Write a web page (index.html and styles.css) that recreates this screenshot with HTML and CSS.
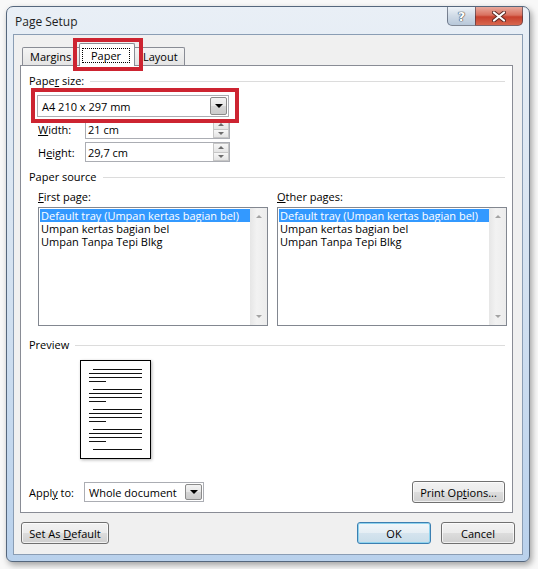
FILE: index.html
```html
<!DOCTYPE html>
<html lang="en">
<head>
  <meta charset="UTF-8">
  <title>Page Setup</title>
  <link rel="stylesheet" href="styles.css">
</head>
<body>
  <div class="window">
    <div class="titlebar">
      <span class="title">Page Setup</span>
      <div class="caption">
        <div class="cap-help">?</div>
        <div class="cap-close">
          <svg width="14" height="11" viewBox="0 0 14 11">
            <path d="M2 1.5 L12 9.5 M12 1.5 L2 9.5" stroke="#5a2a25" stroke-width="4" stroke-linecap="round"/>
            <path d="M2 1.5 L12 9.5 M12 1.5 L2 9.5" stroke="#ffffff" stroke-width="2.2" stroke-linecap="round"/>
          </svg>
        </div>
      </div>
    </div>

    <div class="client">
      <div class="tabs">
        <div class="tab tab-margins">Margins</div>
        <div class="tab tab-paper active"><span class="focus">Paper</span></div>
        <div class="tab tab-layout">Layout</div>
      </div>

      <div class="panel">
        <div class="group"><span>Pape<u>r</u> size:</span></div>
        <div class="combo combo-size">
          <span class="combo-text">A4 210 x 297 mm</span>
          <span class="drop"><i></i></span>
        </div>

        <div class="field-row first">
          <span class="field-label"><u>W</u>idth:</span>
          <div class="spin"><span class="spin-text">21 cm</span><span class="spin-btns"><b class="up"></b><b class="down"></b></span></div>
        </div>
        <div class="field-row">
          <span class="field-label">H<u>e</u>ight:</span>
          <div class="spin"><span class="spin-text">29,7 cm</span><span class="spin-btns"><b class="up"></b><b class="down"></b></span></div>
        </div>

        <div class="group source-title"><span>Paper source</span></div>
        <div class="sources">
          <div class="source">
            <span class="source-label"><u>F</u>irst page:</span>
            <div class="list">
              <div class="items">
                <div class="item sel">Default tray (Umpan kertas bagian bel)</div>
                <div class="item">Umpan kertas bagian bel</div>
                <div class="item">Umpan Tanpa Tepi Blkg</div>
              </div>
              <div class="scroll"><b class="up"></b><b class="down"></b></div>
            </div>
          </div>
          <div class="source">
            <span class="source-label"><u>O</u>ther pages:</span>
            <div class="list">
              <div class="items">
                <div class="item sel">Default tray (Umpan kertas bagian bel)</div>
                <div class="item">Umpan kertas bagian bel</div>
                <div class="item">Umpan Tanpa Tepi Blkg</div>
              </div>
              <div class="scroll"><b class="up"></b><b class="down"></b></div>
            </div>
          </div>
        </div>

        <div class="group preview-title"><span>Preview</span></div>
        <div class="page">
          <svg width="71" height="99" viewBox="0 0 71 99">
            <rect x="0.5" y="0.5" width="70" height="98" fill="#fff" stroke="#000"/>
            <g stroke="#111" stroke-width="1.2">
              <path d="M13 9.5H62 M9 13.5H62 M9 17.5H62 M9 21.5H26"/>
              <path d="M13 29.5H62 M9 33.5H62 M9 37.5H62 M9 41.5H26"/>
              <path d="M13 49.5H62 M9 53.5H62 M9 57.5H62 M9 61.5H26"/>
              <path d="M13 69.5H62 M9 73.5H62 M9 77.5H62 M9 81.5H26"/>
              <path d="M13 89.5H62"/>
            </g>
          </svg>
        </div>

        <div class="apply-row">
          <span class="apply-label">Appl<u>y</u> to:</span>
          <div class="combo combo-apply">
            <span class="combo-text">Whole document</span>
            <span class="drop"><i></i></span>
          </div>
          <button class="btn btn-print">Print Op<u>t</u>ions...</button>
        </div>
      </div>

      <div class="footer">
        <button class="btn btn-default">Set As <u>D</u>efault</button>
        <button class="btn btn-ok">OK</button>
        <button class="btn btn-cancel">Cancel</button>
      </div>
    </div>
  </div>

  <!-- red highlight marks drawn over the dialog -->
  <div class="mark mark-tab"></div>
  <div class="mark mark-size"></div>
</body>
</html>
```

FILE: styles.css
```css
body {
  margin: 0;
  width: 538px;
  height: 569px;
  overflow: hidden;
  position: relative;
  background-color: #f8f8f8;
  font-family: 'Open Sans', 'Noto Sans', sans-serif;
  font-size: 11px;
  color: #000000;
}

u {
  text-decoration-thickness: 1px;
  text-underline-offset: 1px;
}

.window {
  margin: 6px 0 0 6px;
  width: 524px;
  height: 556px;
  box-sizing: border-box;
  border: 1px solid #55677d;
  border-radius: 7px 7px 6px 6px;
  background: linear-gradient(#e9eff6, #d6e3f1 45%, #b9d1ec);
  padding: 0 6px 6px;
  box-shadow: 2px 3px 6px rgba(0, 0, 0, 0.35);
  display: flex;
  flex-direction: column;
}

.titlebar {
  height: 27px;
  display: flex;
  align-items: flex-start;
}

.title {
  padding: 7px 0 0 2px;
  line-height: 16px;
  font-size: 12px;
  color: #1e1e1e;
}

.caption {
  margin-left: auto;
  display: flex;
}

.cap-help,
.cap-close {
  height: 19px;
  box-sizing: border-box;
  border: 1px solid rgba(40, 50, 70, 0.55);
  border-top: none;
  display: flex;
  align-items: center;
  justify-content: center;
}

.cap-help {
  width: 28px;
  border-right: none;
  border-radius: 0 0 0 5px;
  background: linear-gradient(#eef3f8, #cfdae6 50%, #b8c8da);
  font-family: 'DejaVu Sans', sans-serif;
  font-weight: bold;
  font-size: 13px;
  color: #ffffff;
  text-shadow: 0 0 1px #3a4350, 0 0 1px #3a4350, 0 0 1px #3a4350;
}

.cap-close {
  width: 48px;
  border-radius: 0 0 5px 0;
  background: linear-gradient(#e9a99c, #d9715f 45%, #c7402d 55%, #d8674f);
}

.client {
  flex: 1;
  background-color: #f0f0f0;
  border: 1px solid #8a9db4;
  display: flex;
  flex-direction: column;
}

.tabs {
  height: 30px;
  box-sizing: border-box;
  padding-left: 8px;
  display: flex;
  align-items: flex-end;
}

.tab {
  height: 18px;
  box-sizing: border-box;
  border: 1px solid #898c95;
  border-bottom: none;
  border-radius: 2px 2px 0 0;
  background: linear-gradient(#f4f4f4, #e4e4e4);
  line-height: 17px;
  padding-left: 7px;
}

.tab-margins {
  width: 59px;
}

.tab-paper {
  width: 56px;
  height: 23px;
  margin: 0 -2px -1px;
  padding: 0;
  position: relative;
  z-index: 1;
  background: #ffffff;
}

.focus {
  display: block;
  margin: 4px 4px 0 2px;
  height: 15px;
  box-sizing: border-box;
  border: 1px dotted #000000;
  line-height: 13px;
  text-align: center;
}

.tab-layout {
  width: 52px;
  padding-left: 9px;
}

.panel {
  margin: 0 9px 0 6px;
  height: 448px;
  box-sizing: border-box;
  border: 1px solid #898c95;
  background: #ffffff;
  padding: 7px 7px 9px 8px;
  display: flex;
  flex-direction: column;
}

.group {
  display: flex;
  align-items: center;
  line-height: 16px;
}

.group::after {
  content: "";
  flex: 1;
  height: 1px;
  margin-left: 6px;
  background-color: #dcdcdc;
}

.combo {
  display: flex;
  align-items: center;
  box-sizing: border-box;
  border: 1px solid #abadb3;
  background: #ffffff;
}

.combo-text {
  flex: 1;
  padding-left: 4px;
  white-space: nowrap;
}

.combo-size {
  margin: 6px 0 0 8px;
  width: 192px;
  height: 22px;
}

.drop {
  width: 17px;
  height: 18px;
  margin-right: 1px;
  box-sizing: border-box;
  border: 1px solid #8b8b8b;
  border-radius: 2px;
  background: linear-gradient(#f3f3f3, #e6e6e6 50%, #d6d6d6 50%, #cbcbcb);
  display: flex;
  align-items: center;
  justify-content: center;
}

.drop i {
  width: 0;
  height: 0;
  border-left: 4px solid transparent;
  border-right: 4px solid transparent;
  border-top: 4px solid #000000;
}

.field-row {
  display: flex;
  align-items: center;
  margin: 3px 0 0 9px;
}

.field-row.first {
  margin-top: 2px;
}

.field-label {
  width: 47px;
}

.spin {
  width: 145px;
  height: 20px;
  box-sizing: border-box;
  border: 1px solid #abadb3;
  display: flex;
  align-items: center;
}

.spin-text {
  flex: 1;
  padding-left: 2px;
}

.spin-btns {
  width: 16px;
  height: 18px;
  display: flex;
  flex-direction: column;
}

.spin-btns b,
.scroll b {
  flex: 1;
  display: flex;
  align-items: center;
  justify-content: center;
}

.spin-btns b {
  border: 1px solid #c6c6c6;
  background: linear-gradient(#f7f7f7, #e4e4e4);
}

.spin-btns b + b {
  border-top: none;
}

.spin-btns b::before,
.scroll b::before {
  content: "";
  border-left: 3px solid transparent;
  border-right: 3px solid transparent;
}

.spin-btns .up::before {
  border-bottom: 3px solid #6d6d6d;
}

.spin-btns .down::before {
  border-top: 3px solid #6d6d6d;
}

.source-title {
  margin-top: 7px;
}

.sources {
  margin: 4px 0 0 9px;
  display: flex;
  gap: 9px;
}

.source {
  display: flex;
  flex-direction: column;
}

.source-label {
  line-height: 16px;
}

.list {
  margin-top: 2px;
  width: 230px;
  height: 119px;
  box-sizing: border-box;
  border: 1px solid #828790;
  display: flex;
}

.items {
  flex: 1;
  padding: 1px 0 0 1px;
}

.item {
  line-height: 13px;
  padding-left: 1px;
  white-space: nowrap;
}

.item.sel {
  background-color: #3399ff;
  color: #ffffff;
}

.scroll {
  width: 17px;
  background: linear-gradient(90deg, #e6e6e6, #f2f2f2 40%, #ececec);
  display: flex;
  flex-direction: column;
  justify-content: space-between;
}

.scroll b {
  flex: none;
  height: 17px;
}

.scroll .up::before {
  border-bottom: 3px solid #a3a3a3;
}

.scroll .down::before {
  border-top: 3px solid #a3a3a3;
}

.preview-title {
  margin-top: 11px;
}

.page {
  margin: 7px 0 0 51px;
  width: 71px;
  height: 99px;
  box-shadow: 1px 1px 3px rgba(0, 0, 0, 0.3);
}

.page svg {
  display: block;
}

.apply-row {
  margin-top: auto;
  display: flex;
  align-items: center;
}

.apply-label {
  width: 55px;
}

.combo-apply {
  width: 120px;
  height: 20px;
}

.combo-apply .drop {
  height: 16px;
}

.btn {
  height: 22px;
  box-sizing: border-box;
  border: 1px solid #707070;
  border-radius: 3px;
  background: linear-gradient(#f2f2f2, #ebebeb 50%, #dddddd 50%, #cfcfcf);
  font-family: inherit;
  font-size: 11px;
  color: #000000;
  padding: 0;
  box-shadow: inset 0 0 0 1px rgba(255, 255, 255, 0.7);
}

.btn-print {
  margin-left: auto;
  width: 93px;
}

.footer {
  padding: 9px 7px 0;
  display: flex;
}

.btn-default {
  width: 88px;
}

.btn-ok {
  margin-left: auto;
  width: 74px;
  border-color: #3c7fb1;
  background: linear-gradient(#f1f7fb, #e5eef4 50%, #d5e4ee 50%, #c9dde9);
  box-shadow: inset 0 0 0 1px #8fd3ee;
}

.btn-cancel {
  margin-left: 10px;
  width: 74px;
}

.mark {
  position: absolute;
  box-sizing: border-box;
  border: 4px solid #cd2431;
}

.mark-tab {
  left: 73px;
  top: 38px;
  width: 70px;
  height: 33px;
}

.mark-size {
  left: 31px;
  top: 88px;
  width: 208px;
  height: 35px;
}
```
